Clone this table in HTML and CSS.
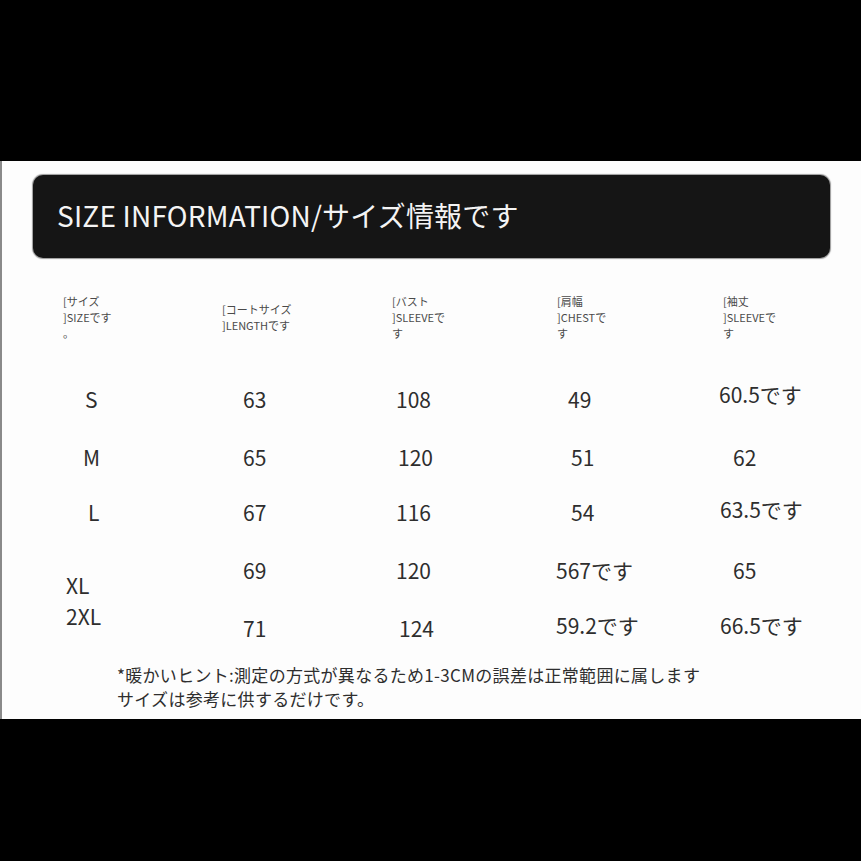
FILE: index.html
```html
<!DOCTYPE html>
<html lang="ja">
<head>
<meta charset="utf-8">
<title>SIZE INFORMATION</title>
<link rel="stylesheet" href="styles.css">
</head>
<body>
<div class="sheet">
  <div class="title-bar">SIZE INFORMATION/サイズ情報です</div>

  <div class="size-table">
    <div class="head h1">[サイズ<br>]SIZEです<br>。</div>
    <div class="head h2">[コートサイズ<br>]LENGTHです</div>
    <div class="head h3">[バスト<br>]SLEEVEで<br>す</div>
    <div class="head h4">[肩幅<br>]CHESTで<br>す</div>
    <div class="head h5">[袖丈<br>]SLEEVEで<br>す</div>

    <div class="cell r1 pl23">S</div>
    <div class="cell r1 pl23">63</div>
    <div class="cell r1 pl4">108</div>
    <div class="cell r1 pl13">49</div>
    <div class="cell r1 up pl0">60.5です</div>

    <div class="cell r2 pl21">M</div>
    <div class="cell r2 pl23">65</div>
    <div class="cell r2 pl6">120</div>
    <div class="cell r2 pl16">51</div>
    <div class="cell r2 pl14">62</div>

    <div class="cell r3 pl26">L</div>
    <div class="cell r3 pl23">67</div>
    <div class="cell r3 pl4">116</div>
    <div class="cell r3 pl16">54</div>
    <div class="cell r3 up pl1">63.5です</div>

    <div class="cell r4 low pl4">XL</div>
    <div class="cell r4 pl23">69</div>
    <div class="cell r4 pl4">120</div>
    <div class="cell r4 pl1">567です</div>
    <div class="cell r4 pl14">65</div>

    <div class="cell r5 high pl4">2XL</div>
    <div class="cell r5 pl23">71</div>
    <div class="cell r5 pl7">124</div>
    <div class="cell r5 up pl1">59.2です</div>
    <div class="cell r5 up pl1">66.5です</div>
  </div>

  <div class="note">
    <p>*暖かいヒント:測定の方式が異なるため1-3CMの誤差は正常範囲に属します</p>
    <p>サイズは参考に供するだけです。</p>
  </div>
</div>
</body>
</html>
```

FILE: styles.css
```css
html, body {
  margin: 0;
  padding: 0;
  background: #000;
}

body {
  font-family: "Noto Sans CJK JP", "Noto Sans", sans-serif;
  color: #2e2e2e;
  width: 861px;
  height: 861px;
  overflow: hidden;
}

.sheet {
  margin-top: 161px;
  height: 558px;
  background: #fdfdfd;
  border-left: 2px solid #8a8a8a;
  box-sizing: border-box;
  padding-top: 14px;
}

.title-bar {
  margin-left: 31px;
  width: 797px;
  height: 83px;
  box-sizing: border-box;
  border-radius: 10px;
  background: #151515;
  box-shadow: 0 0 1px 1px #9a9a9a;
  color: #f4f4f4;
  font-size: 28px;
  display: flex;
  align-items: center;
  padding-left: 24px;
  padding-bottom: 4px;
  letter-spacing: 0.2px;
}

.size-table {
  margin-top: 32px;
  margin-left: 60px;
  display: grid;
  grid-template-columns: 158px 172px 163px 164px 120px;
  grid-template-rows: 88px 62px 53px 58px 48px 60px;
  align-items: start;
}

.head {
  font-size: 11px;
  line-height: 16px;
  color: #4a4a4a;
  margin-top: 3px;
}
.h1 { padding-left: 1px; }
.h2 { padding-left: 2px; margin-top: 11px; }
.h3 { padding-left: 0; }
.h4 { padding-left: 2px; }
.h5 { padding-left: 4px; }

.cell {
  font-size: 21px;
  line-height: 30px;
  white-space: nowrap;
}

.r1 { margin-top: 6px; }
.r1.up { margin-top: 1px; }
.r2 { margin-top: 2px; }
.r3 { margin-top: 4px; }
.r3.up { margin-top: 1px; }
.r4 { margin-top: 4px; }
.r4.low { margin-top: 19px; }
.r5 { margin-top: 14px; }
.r5.up { margin-top: 11px; }
.r5.high { margin-top: 2px; }

.pl0 { padding-left: 0; }
.pl1 { padding-left: 1px; }
.pl4 { padding-left: 4px; }
.pl6 { padding-left: 6px; }
.pl7 { padding-left: 7px; }
.pl13 { padding-left: 13px; }
.pl14 { padding-left: 14px; }
.pl16 { padding-left: 16px; }
.pl21 { padding-left: 21px; }
.pl23 { padding-left: 23px; }
.pl26 { padding-left: 26px; }

.note {
  margin-top: 4px;
  margin-left: 115px;
  font-size: 17px;
  line-height: 24px;
  letter-spacing: 0.3px;
  color: #2e2e2e;
}
.note p {
  margin: 0;
  white-space: nowrap;
}
```
